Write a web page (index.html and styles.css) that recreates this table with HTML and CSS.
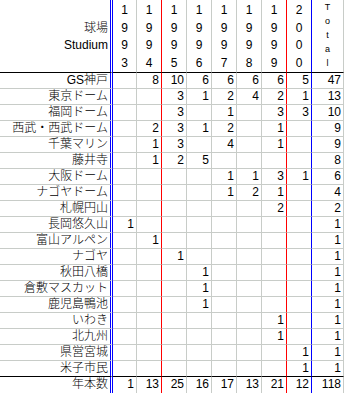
FILE: index.html
```html
<!DOCTYPE html>
<html lang="ja">
<head>
<meta charset="utf-8">
<title>球場 Studium</title>
<link rel="stylesheet" href="styles.css">
</head>
<body>
<div class="sheet">
  <div class="row head">
    <div class="label"><br>球場<br>Studium</div>
    <div>1<br>9<br>9<br>3</div>
    <div>1<br>9<br>9<br>4</div>
    <div>1<br>9<br>9<br>5</div>
    <div>1<br>9<br>9<br>6</div>
    <div>1<br>9<br>9<br>7</div>
    <div>1<br>9<br>9<br>8</div>
    <div>1<br>9<br>9<br>9</div>
    <div>2<br>0<br>0<br>0</div>
    <div class="total">T<br>o<br>t<br>a<br>l</div>
  </div>
  <div class="row"><div>GS神戸</div><div></div><div>8</div><div>10</div><div>6</div><div>6</div><div>6</div><div>6</div><div>5</div><div>47</div></div>
  <div class="row"><div>東京ドーム</div><div></div><div></div><div>3</div><div>1</div><div>2</div><div>4</div><div>2</div><div>1</div><div>13</div></div>
  <div class="row"><div>福岡ドーム</div><div></div><div></div><div>3</div><div></div><div>1</div><div></div><div>3</div><div>3</div><div>10</div></div>
  <div class="row"><div>西武・西武ドーム</div><div></div><div>2</div><div>3</div><div>1</div><div>2</div><div></div><div>1</div><div></div><div>9</div></div>
  <div class="row"><div>千葉マリン</div><div></div><div>1</div><div>3</div><div></div><div>4</div><div></div><div>1</div><div></div><div>9</div></div>
  <div class="row"><div>藤井寺</div><div></div><div>1</div><div>2</div><div>5</div><div></div><div></div><div></div><div></div><div>8</div></div>
  <div class="row"><div>大阪ドーム</div><div></div><div></div><div></div><div></div><div>1</div><div>1</div><div>3</div><div>1</div><div>6</div></div>
  <div class="row"><div>ナゴヤドーム</div><div></div><div></div><div></div><div></div><div>1</div><div>2</div><div>1</div><div></div><div>4</div></div>
  <div class="row"><div>札幌円山</div><div></div><div></div><div></div><div></div><div></div><div></div><div>2</div><div></div><div>2</div></div>
  <div class="row"><div>長岡悠久山</div><div>1</div><div></div><div></div><div></div><div></div><div></div><div></div><div></div><div>1</div></div>
  <div class="row"><div>富山アルペン</div><div></div><div>1</div><div></div><div></div><div></div><div></div><div></div><div></div><div>1</div></div>
  <div class="row"><div>ナゴヤ</div><div></div><div></div><div>1</div><div></div><div></div><div></div><div></div><div></div><div>1</div></div>
  <div class="row"><div>秋田八橋</div><div></div><div></div><div></div><div>1</div><div></div><div></div><div></div><div></div><div>1</div></div>
  <div class="row"><div>倉敷マスカット</div><div></div><div></div><div></div><div>1</div><div></div><div></div><div></div><div></div><div>1</div></div>
  <div class="row"><div>鹿児島鴨池</div><div></div><div></div><div></div><div>1</div><div></div><div></div><div></div><div></div><div>1</div></div>
  <div class="row"><div>いわき</div><div></div><div></div><div></div><div></div><div></div><div></div><div>1</div><div></div><div>1</div></div>
  <div class="row"><div>北九州</div><div></div><div></div><div></div><div></div><div></div><div></div><div>1</div><div></div><div>1</div></div>
  <div class="row"><div>県営宮城</div><div></div><div></div><div></div><div></div><div></div><div></div><div></div><div>1</div><div>1</div></div>
  <div class="row lastdata"><div>米子市民</div><div></div><div></div><div></div><div></div><div></div><div></div><div></div><div>1</div><div>1</div></div>
  <div class="row sum"><div>年本数</div><div>1</div><div>13</div><div>25</div><div>16</div><div>17</div><div>13</div><div>21</div><div>12</div><div>118</div></div>
</div>
</body>
</html>
```

FILE: styles.css
```css
html, body {
  margin: 0;
  padding: 0;
  background: #ffffff;
}

body {
  font-family: "Liberation Sans", Arial, "Noto Sans CJK JP", sans-serif;
  font-size: 12px;
  color: #000000;
  overflow: hidden;
}

.sheet {
  width: 344px;
}

.row {
  display: grid;
  grid-template-columns: 113px 24px repeat(7, 25px) 32px;
  height: 16px;
}

.row > div {
  box-sizing: border-box;
  border-right: 1px solid #c8ccc8;
  border-bottom: 1px solid #c8ccc8;
  text-align: right;
  padding-right: 2px;
  line-height: 15px;
  white-space: nowrap;
  overflow: hidden;
}

.row > div:nth-child(1) {
  border-right: 3px double #0000ff;
  font-weight: 300;
}

.row > div:nth-child(3),
.row > div:nth-child(8) {
  border-right-color: #ff0000;
}

.row > div:nth-child(9) {
  border-right-color: #0000ff;
}

.head {
  height: 73px;
}

.head > div {
  border-bottom-color: #000000;
  line-height: 17.5px;
  padding-top: 2px;
  padding-right: 0;
  text-align: center;
}

.head > .label {
  text-align: right;
  padding-right: 2px;
}

.head > .total {
  font-size: 9px;
  line-height: 14px;
  padding-top: 0;
}

.lastdata > div {
  border-bottom-color: #000000;
}

.sum > div {
  border-bottom: none;
}
```
